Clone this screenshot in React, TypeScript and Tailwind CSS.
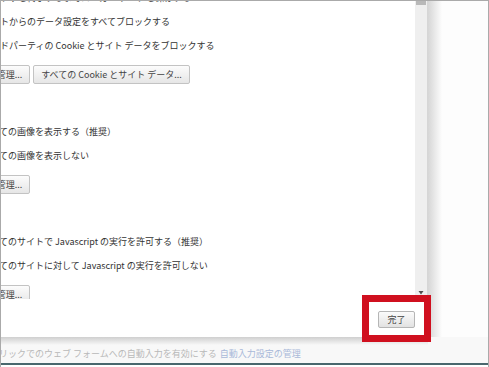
import type { ReactNode } from "react";

const labelClassName = "flex h-[24px] items-center whitespace-nowrap text-[9px] text-[#333]";

const buttonClassName =
  "flex h-[19px] shrink-0 items-center justify-center whitespace-nowrap rounded-[2px] border border-[#c3c3c3] bg-gradient-to-b from-[#fcfcfc] to-[#e6e6e6] text-[9px] text-[#444]";

function Label({ children }: { children: ReactNode }) {
  return <div className={`${labelClassName} -ml-[19px]`}>{children}</div>;
}

function Section({ lines, wideButton }: { lines: string[]; wideButton?: boolean }) {
  return (
    <div className="flex flex-col">
      {lines.map((line) => (
        <Label key={line}>{line}</Label>
      ))}
      <div className="mt-[7px] flex gap-[3px]">
        <button className={`${buttonClassName} -ml-[39px] w-[68px]`}>例外の管理...</button>
        {wideButton && (
          <button className={`${buttonClassName} w-[157px]`}>すべての Cookie とサイト データ...</button>
        )}
      </div>
    </div>
  );
}

export default function App() {
  return (
    <div className="relative flex h-[367px] w-[489px] flex-col overflow-hidden border-x border-t border-[#aaaaaa] bg-[#fdfdfd] font-['Noto_Sans_CJK_JP',sans-serif]">
      {/* dialog + right shadow */}
      <div className="flex h-[336px] shrink-0">
        <div className="flex w-[427px] shrink-0 flex-col bg-white">
          <div className="flex h-[298px] shrink-0">
            <div className="flex-1 overflow-hidden">
              <div className="-mt-[15px] flex flex-col gap-[36px]">
                <Section
                  lines={[
                    "ブラウザを終了するまでローカル データを保存する",
                    "サイトからのデータ設定をすべてブロックする",
                    "サードパーティの Cookie とサイト データをブロックする",
                  ]}
                  wideButton
                />
                <Section lines={["すべての画像を表示する（推奨）", "すべての画像を表示しない"]} />
                <Section
                  lines={[
                    "すべてのサイトで Javascript の実行を許可する（推奨）",
                    "すべてのサイトに対して Javascript の実行を許可しない",
                  ]}
                />
              </div>
            </div>
            {/* scrollbar */}
            <div className="flex w-[13px] shrink-0 flex-col justify-between border-r border-[#d6d6d6] bg-[#efefef] pb-[4px]">
              <div className="mx-[1px] h-[4px] bg-[#b9b9b9]" />
              <svg width="12" height="4" viewBox="0 0 12 4" className="self-center">
                <polygon points="3.5,0 8.5,0 6,3.5" fill="#505050" />
              </svg>
            </div>
          </div>
          <div className="flex flex-1 items-start justify-end pr-[13px] pt-[12px]">
            <button className="flex h-[17px] w-[37px] items-center justify-center rounded-[2px] border border-[#b5b5b5] bg-gradient-to-b from-[#fbfbfb] to-[#e2e2e2] text-[9px] text-[#444]">
              完了
            </button>
          </div>
        </div>
        <div className="w-[14px] shrink-0 bg-gradient-to-r from-[#d6d6d6] to-[#fdfdfd]" />
        <div className="flex-1" />
      </div>

      {/* page behind the overlay */}
      <div className="flex flex-1 flex-col bg-[#f8f8f8]">
        <div className="h-[8px] w-[427px] bg-gradient-to-b from-[#cfcfcf] to-[#f8f8f8]" />
        <div className="flex h-[18px] items-center whitespace-nowrap text-[9px]">
          <span className="-ml-[29px] text-[#b9b9b9]">ワンクリックでのウェブ フォームへの自動入力を有効にする</span>
          <span className="ml-[3px] text-[#a9b9d9]">自動入力設定の管理</span>
        </div>
        <div className="h-[2px] bg-[#49676d]" />
        <div className="flex-1 bg-white" />
      </div>

      {/* red highlight */}
      <div className="absolute left-[361px] top-[294px] h-[47px] w-[69px] border-[7px] border-[#d0101f]" />
    </div>
  );
}
